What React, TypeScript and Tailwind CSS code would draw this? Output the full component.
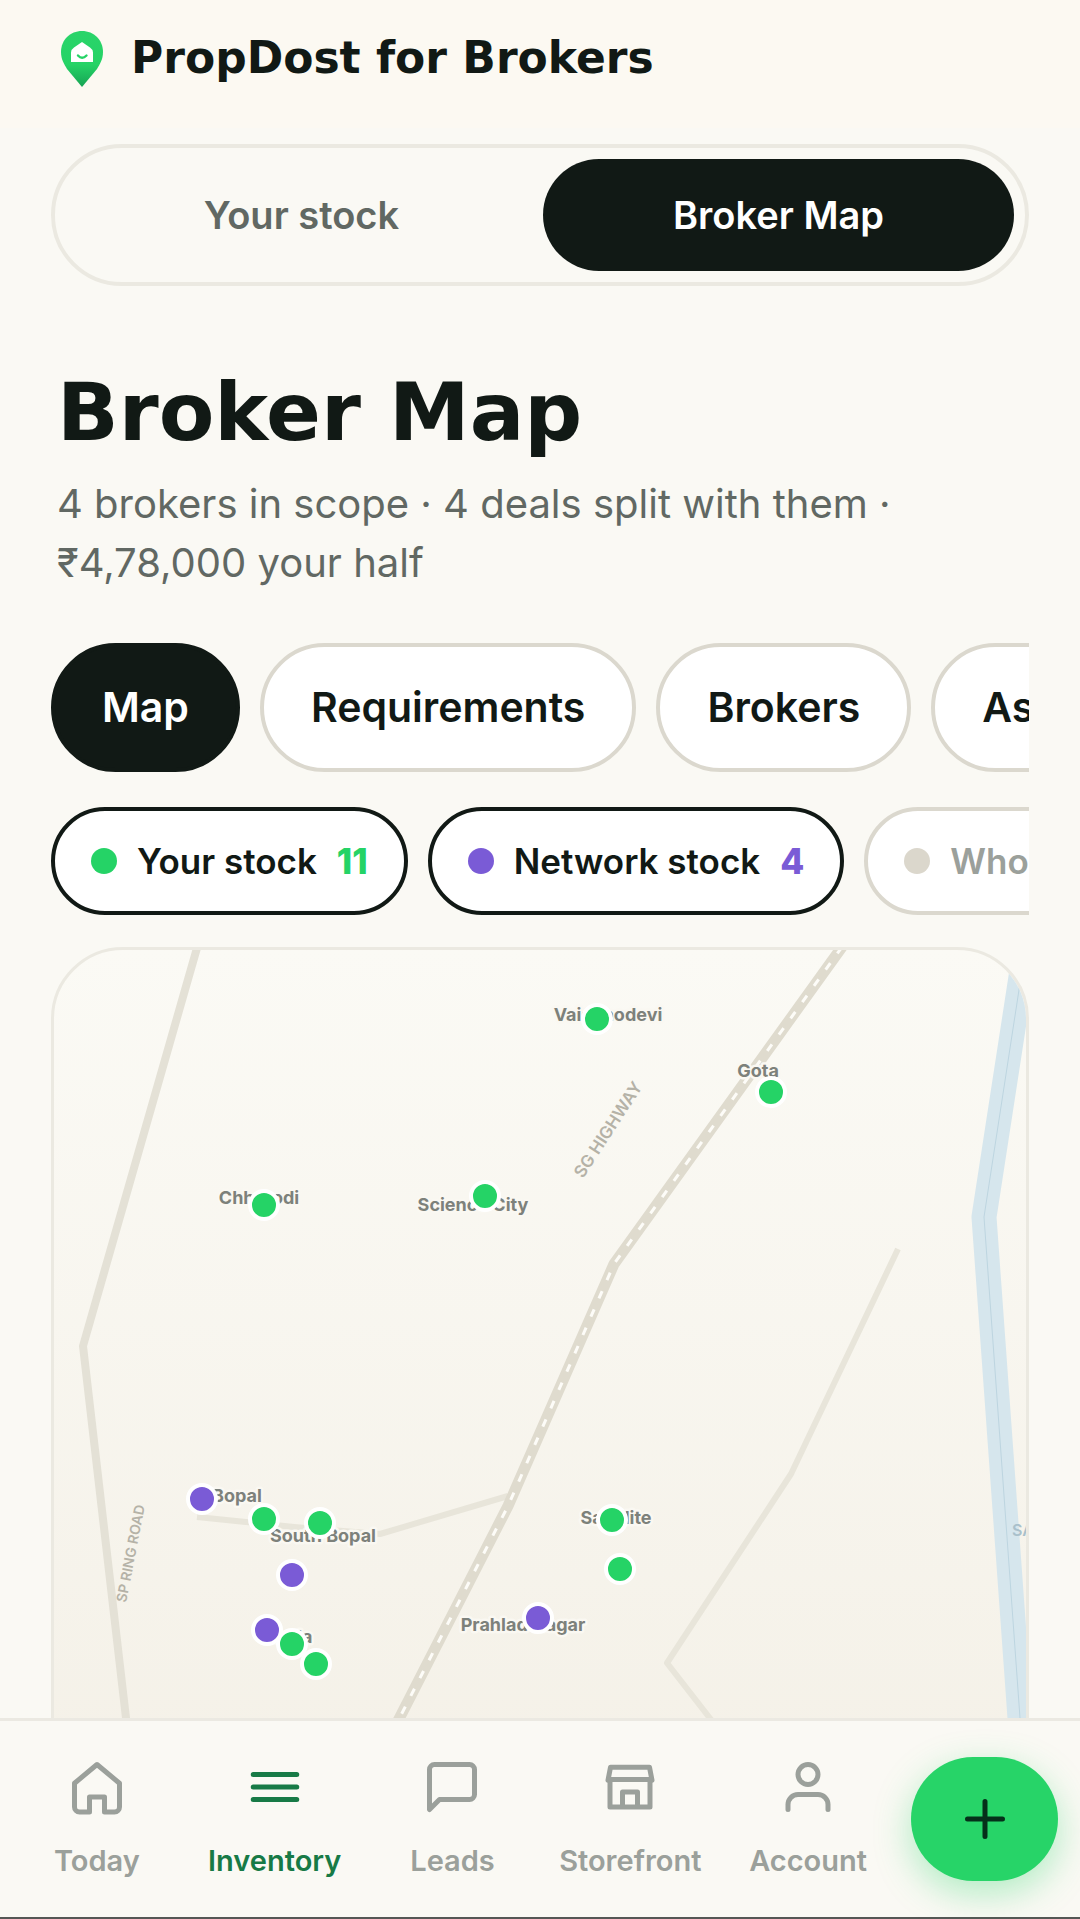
import { useState } from 'react'
import type { ReactNode } from 'react'
import clsx from 'clsx'

type Pin = { x: number; y: number; kind: 'own' | 'network' }

const PINS: Pin[] = [
  { x: 543, y: 69, kind: 'own' },
  { x: 717, y: 142, kind: 'own' },
  { x: 210, y: 255, kind: 'own' },
  { x: 431, y: 246, kind: 'own' },
  { x: 148, y: 549, kind: 'network' },
  { x: 210, y: 569, kind: 'own' },
  { x: 266, y: 573, kind: 'own' },
  { x: 238, y: 625, kind: 'network' },
  { x: 213, y: 680, kind: 'network' },
  { x: 238, y: 694, kind: 'own' },
  { x: 262, y: 714, kind: 'own' },
  { x: 558, y: 570, kind: 'own' },
  { x: 566, y: 619, kind: 'own' },
  { x: 484, y: 668, kind: 'network' },
]

const AREAS = [
  { name: 'Vaishnodevi', x: 554, y: 71 },
  { name: 'Gota', x: 704, y: 127 },
  { name: 'Chharodi', x: 205, y: 254 },
  { name: 'Science City', x: 419, y: 261 },
  { name: 'Bopal', x: 183, y: 552 },
  { name: 'South Bopal', x: 269, y: 592 },
  { name: 'Satellite', x: 562, y: 574 },
  { name: 'Shela', x: 234, y: 693 },
  { name: 'Prahlad Nagar', x: 469, y: 681 },
]

const VIEWS = ['Map', 'Requirements', 'Brokers', 'Assignments']

const LAYERS = [
  { id: 'own', label: 'Your stock', count: 11, on: true, dot: 'bg-[#25d366]', text: 'text-[#25d366]' },
  { id: 'network', label: 'Network stock', count: 4, on: true, dot: 'bg-[#7a5bd6]', text: 'text-[#7a5bd6]' },
  { id: 'whole', label: 'Whole city', count: 0, on: false, dot: 'bg-[#dbd7cc]', text: 'text-[#9ba09b]' },
]

function LogoPin() {
  return (
    <svg viewBox="0 0 42 56" className="h-14 w-[42px] shrink-0" aria-hidden="true">
      <defs>
        <linearGradient id="pin" x1="0" y1="0" x2="0" y2="1">
          <stop offset="0" stopColor="#2ad46a" />
          <stop offset="0.6" stopColor="#25d366" />
          <stop offset="1" stopColor="#16a354" />
        </linearGradient>
      </defs>
      <path d="M21 0C9 0 0 9 0 21c0 7 3 12 6 17l15 18 15-18c3-5 6-10 6-17C42 9 33 0 21 0Z" fill="url(#pin)" />
      <path d="M21 11l8 5.500q3 2 3 5V31H10v-9.500q0-3 3-5Z" fill="#fff" />
      <path d="M17 24.500q4 4.500 8.500 0" fill="none" stroke="#25d366" strokeWidth="2.4" strokeLinecap="round" />
    </svg>
  )
}

function NavIcon({ children }: { children: ReactNode }) {
  return (
    <svg
      viewBox="0 0 24 24"
      className="size-15"
      fill="none"
      stroke="currentColor"
      strokeWidth="2"
      strokeLinecap="round"
      strokeLinejoin="round"
      aria-hidden="true"
    >
      {children}
    </svg>
  )
}

const NAV = [
  {
    label: 'Today',
    icon: <path d="M3 10.500 12 3l9 7.500V20a2 2 0 0 1-2 2h-4v-6H9v6H5a2 2 0 0 1-2-2Z" />,
  },
  { label: 'Inventory', icon: <path d="M3.300 7h17.400M3.300 12h17.400M3.300 17h17.400" /> },
  {
    label: 'Leads',
    icon: <path d="M21 15a2 2 0 0 1-2 2H7l-4 4V5a2 2 0 0 1 2-2h14a2 2 0 0 1 2 2Z" />,
  },
  {
    label: 'Storefront',
    icon: <path d="M3.200 9.300l1-5.200h15.600l1 5.200M3.500 9h17M4 9v11h16V9M9 20v-6h6v6" />,
  },
  {
    label: 'Account',
    icon: (
      <>
        <circle cx="12" cy="7" r="4" />
        <path d="M20 21v-2a4 4 0 0 0-4-4H8a4 4 0 0 0-4 4v2" />
      </>
    ),
  },
]

function CityMap() {
  return (
    <svg viewBox="0 0 972 1000" className="block w-full" role="img" aria-label="Map of brokers and stock">
      <g fill="none" strokeLinejoin="round">
        <path d="M844 299 737 524 613 713 655 767 695 820" stroke="#e8e5da" strokeWidth="6" />
        <path d="M143 567 240 577 326 584 454 546" stroke="#e8e5da" strokeWidth="6" />
        <path d="M143 -2 29 396 72 768 100 1010" stroke="#e4e1d6" strokeWidth="8" />
        <path d="M788 -3 560 314 454 556 346 767 220 1010" stroke="#dfdbce" strokeWidth="11" />
        <path d="M788 -3 560 314 454 556 346 767 220 1010" stroke="#fdfcf8" strokeWidth="3" strokeDasharray="8 12" />
        <path d="M973 -12 930 267 966 768 980 1010" stroke="#d6e6ed" strokeWidth="25" />
        <path d="M973 -12 930 267 966 768 980 1010" stroke="#bdd5e0" strokeWidth="1" />
      </g>

      <g fontSize="17" fontWeight="600" fill="#b5b2a7">
        <text transform="translate(529 229) rotate(-57)">SG HIGHWAY</text>
        <text transform="translate(72 653) rotate(-79)" fontSize="14">SP RING ROAD</text>
        <text x="958" y="586" fontSize="16" fill="#a9c0cb">SABARMATI</text>
      </g>

      <g
        fontSize="18"
        fontWeight="700"
        fill="#7d817b"
        stroke="#faf8f2"
        strokeWidth="5"
        strokeLinejoin="round"
        paintOrder="stroke"
        textAnchor="middle"
      >
        {AREAS.map((a) => (
          <text key={a.name} x={a.x} y={a.y}>
            {a.name}
          </text>
        ))}
      </g>

      {PINS.map((p) => (
        <circle
          key={`${p.x}-${p.y}`}
          cx={p.x}
          cy={p.y}
          r="14"
          fill={p.kind === 'own' ? '#25d366' : '#7a5bd6'}
          stroke="#fff"
          strokeWidth="4"
        />
      ))}
    </svg>
  )
}

export default function App() {
  const [tab, setTab] = useState('Broker Map')
  const [view, setView] = useState('Map')
  const [page, setPage] = useState('Inventory')

  return (
    <div className="flex h-screen flex-col overflow-hidden bg-[#faf9f4] font-['Inter',sans-serif] text-[#111915]">
      <header className="flex h-32 shrink-0 items-start gap-7 bg-[#fcf9f2] px-[61px] pt-[31px]">
        <LogoPin />
        <span className="font-['DejaVu_Sans',sans-serif] text-[44px] leading-[54px] font-bold">PropDost for Brokers</span>
      </header>

      <main className="min-h-0 flex-1 overflow-x-hidden overflow-y-auto px-[51px] pt-4 [scrollbar-width:none]">
        <div className="grid grid-cols-2 gap-1.5 rounded-full border-4 border-[#ebe9e1] p-[11px]">
          {['Your stock', 'Broker Map'].map((t) => (
            <button
              key={t}
              type="button"
              onClick={() => setTab(t)}
              className={clsx(
                'h-28 rounded-full text-[38px] font-semibold',
                tab === t ? 'bg-[#111915] text-white' : 'text-[#616863]'
              )}
            >
              {t}
            </button>
          ))}
        </div>

        <div className="px-1.5 pt-[78px]">
          <h1 className="font-['DejaVu_Sans',sans-serif] text-[81px] leading-24 font-bold">Broker Map</h1>
          <p className="pt-3.5 text-[40px] leading-[59px] text-[#616863]">
            4 brokers in scope · 4 deals split with them · ₹4,78,000 your half
          </p>
        </div>

        <div className="mt-[51px] flex gap-5 overflow-x-auto [scrollbar-width:none]">
          {VIEWS.map((v) => (
            <button
              key={v}
              type="button"
              onClick={() => setView(v)}
              className={clsx(
                'h-[129px] shrink-0 rounded-full border-4 px-[47px] text-[41px] font-semibold',
                view === v ? 'border-[#111915] bg-[#111915] text-white' : 'border-[#dbd8ce] bg-white'
              )}
            >
              {v}
            </button>
          ))}
        </div>

        <div className="mt-[35px] flex gap-5 overflow-x-auto [scrollbar-width:none]">
          {LAYERS.map((l) => (
            <button
              key={l.id}
              type="button"
              aria-pressed={l.on}
              className={clsx(
                'flex h-[108px] shrink-0 items-center gap-5 rounded-full border-4 bg-white px-9 text-[35px] font-semibold',
                l.on ? 'border-[#111915]' : 'border-[#dbd8ce] text-[#9ba09b]'
              )}
            >
              <span className={clsx('size-[26px] rounded-full', l.dot)} />
              {l.label}
              <span className={clsx('font-extrabold', l.text)}>{l.count}</span>
            </button>
          ))}
        </div>

        <div className="mt-8 overflow-hidden rounded-[72px] border-3 border-[#ebe9e1] bg-linear-to-b from-[#fbfaf5] to-[#f3efe5]">
          <CityMap />
        </div>
      </main>

      <nav className="flex h-[201px] shrink-0 items-center gap-3.5 border-t-3 border-b-2 border-t-[#ebe9e2] border-b-[#555755] bg-[#faf9f4] pr-[22px] pl-2">
        <div className="grid flex-1 grid-cols-5">
          {NAV.map((n) => (
            <a
              key={n.label}
              href={`#${n.label.toLowerCase()}`}
              onClick={() => setPage(n.label)}
              className={clsx(
                'flex flex-col items-center gap-6 text-[29px] leading-10 font-semibold',
                page === n.label ? 'text-[#177a46]' : 'text-[#9ba09b]'
              )}
            >
              <NavIcon>{n.icon}</NavIcon>
              {n.label}
            </a>
          ))}
        </div>
        <button
          type="button"
          aria-label="Add"
          className="flex h-31 w-[147px] shrink-0 items-center justify-center rounded-full bg-[#27d468] text-[#05301a] shadow-[0_12px_36px_rgba(37,211,102,0.35)]"
        >
          <svg viewBox="0 0 24 24" className="size-15" fill="none" stroke="currentColor" strokeWidth="2" strokeLinecap="round" aria-hidden="true">
            <path d="M12 5v14M5 12h14" />
          </svg>
        </button>
      </nav>
    </div>
  )
}
